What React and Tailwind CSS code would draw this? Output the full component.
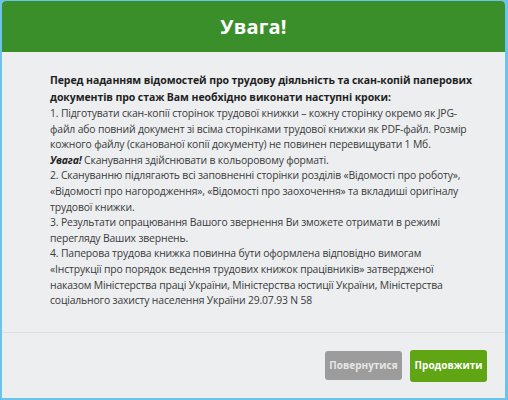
import React from "react";

const WarningModal = () => {
  return (
    <div className="w-[508px] h-[400px] bg-[#6cc4ec] pt-px pl-[2px] pr-[3px] pb-[2px] font-['Open_Sans',sans-serif]">
      <div className="flex flex-col h-full rounded-t-[4px] overflow-hidden bg-[#eceef0]">
        {/* Header */}
        <div className="flex shrink-0 items-center justify-center h-[51px] bg-[#3a8f2b]">
          <h2 className="text-[20px] font-bold text-white tracking-[0.2px]">Увага!</h2>
        </div>

        {/* Instructions */}
        <div className="flex-1 pl-[48px] pt-[20px] text-[10.4px] tracking-[-0.16px] text-[#3a3a3a] whitespace-nowrap">
          <p className="font-bold text-[10.5px] tracking-[-0.08px] text-[#1f1f1f] leading-[17px]">
            Перед наданням відомостей про трудову діяльність та скан-копій паперових
            <br />
            документів про стаж Вам необхідно виконати наступні кроки:
          </p>
          <p className="leading-[15.6px]">
            1. Підготувати скан-копії сторінок трудової книжки – кожну сторінку окремо як JPG-
            <br />
            файл або повний документ зі всіма сторінками трудової книжки як PDF-файл. Розмір
            <br />
            кожного файлу (сканованої копії документу) не повинен перевищувати 1 Мб.
            <br />
            <b className="italic text-[#1f1f1f]">Увага!</b> Сканування здійснювати в кольоровому форматі.
            <br />
            2. Скануванню підлягають всі заповненні сторінки розділів «Відомості про роботу»,
            <br />
            «Відомості про нагородження», «Відомості про заохочення» та вкладиші оригіналу
            <br />
            трудової книжки.
            <br />
            3. Результати опрацювання Вашого звернення Ви зможете отримати в режимі
            <br />
            перегляду Ваших звернень.
            <br />
            4. Паперова трудова книжка повинна бути оформлена відповідно вимогам
            <br />
            «Інструкції про порядок ведення трудових книжок працівників» затвердженої
            <br />
            наказом Міністерства праці України, Міністерства юстиції України, Міністерства
            <br />
            соціального захисту населення України 29.07.93 N 58
          </p>
        </div>

        {/* Actions */}
        <div className="flex shrink-0 items-center justify-end gap-[8px] h-[66px] pr-[18px] border-t border-[#dcdfe2]">
          <button className="w-[77px] h-[29px] rounded-[3px] bg-[#9c9c9c] text-[10px] font-bold text-[#e6e6e6]">
            Повернутися
          </button>
          <button className="w-[77px] h-[32px] rounded-[3px] bg-[#5fa514] text-[10px] font-bold text-white">
            Продовжити
          </button>
        </div>
      </div>
    </div>
  );
};

export default function App() {
  return <WarningModal />;
}
